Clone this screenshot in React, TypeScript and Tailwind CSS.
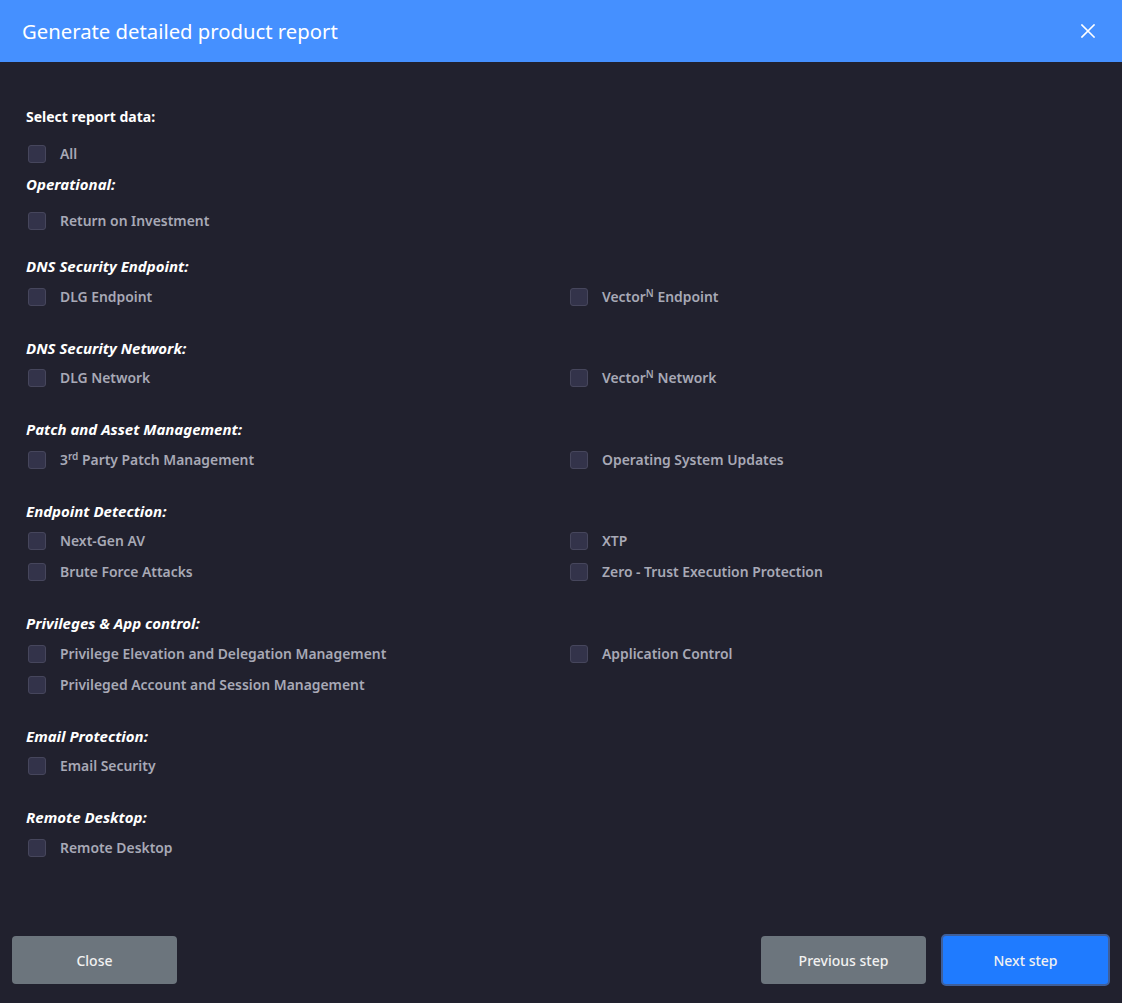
import React from "react";

type Item = { label: React.ReactNode };
type Section = { title: string; rows: [React.ReactNode, React.ReactNode?][] };

const font = { fontFamily: '"Noto Sans", "Open Sans", sans-serif' };

function Box({ label }: Item) {
  return (
    <label className="flex items-center h-[31px] cursor-pointer">
      <span className="ml-[2px] w-[18px] h-[18px] rounded-[3px] bg-[#33334a] border border-[#46465c] shrink-0" />
      <span className="ml-[14px] text-[13.9px] font-semibold text-[#a8a9b6] leading-none">{label}</span>
    </label>
  );
}

const Vector = ({ rest }: { rest: string }) => (
  <>
    Vector<sup className="text-[10px]">N</sup> {rest}
  </>
);

const sections: Section[] = [
  { title: "DNS Security Endpoint:", rows: [["DLG Endpoint", <Vector rest="Endpoint" />]] },
  { title: "DNS Security Network:", rows: [["DLG Network", <Vector rest="Network" />]] },
  {
    title: "Patch and Asset Management:",
    rows: [
      [
        <>
          3<sup className="text-[10px]">rd</sup> Party Patch Management
        </>,
        "Operating System Updates",
      ],
    ],
  },
  {
    title: "Endpoint Detection:",
    rows: [
      ["Next-Gen AV", "XTP"],
      ["Brute Force Attacks", "Zero - Trust Execution Protection"],
    ],
  },
  {
    title: "Privileges & App control:",
    rows: [
      ["Privilege Elevation and Delegation Management", "Application Control"],
      ["Privileged Account and Session Management"],
    ],
  },
  { title: "Email Protection:", rows: [["Email Security"]] },
  { title: "Remote Desktop:", rows: [["Remote Desktop"]] },
];

function Heading({ children }: { children: React.ReactNode }) {
  return <div className="h-[20px] leading-[20px] text-[15px] font-bold italic text-white">{children}</div>;
}

export default function App() {
  return (
    <div className="w-[1122px] h-[1003px] bg-[#21212e] flex flex-col" style={font}>
      <header className="h-[62px] bg-[#4590ff] flex items-center justify-between pl-[22px] pr-[27px] shrink-0">
        <h1 className="text-[20.3px] text-white font-normal leading-none">Generate detailed product report</h1>
        <svg width="14" height="14" viewBox="0 0 14 14" className="text-white">
          <path d="M1 1 L13 13 M13 1 L1 13" stroke="currentColor" strokeWidth="1.6" strokeLinecap="square" />
        </svg>
      </header>

      <main className="flex-1 pt-[45px] pl-[26px] pr-[26px]">
        <div className="h-[20px] leading-[20px] text-[14px] font-bold text-white">Select report data:</div>
        <div className="mt-[11px]">
          <Box label="All" />
        </div>
        <div className="mt-[5px]">
          <Heading>Operational:</Heading>
          <div className="mt-[11px]">
            <Box label="Return on Investment" />
          </div>
        </div>
        <div className="mt-[20px]">
          {sections.map((s, i) => (
            <section key={i} className={i === 0 ? "" : "mt-[25.5px]"}>
              <Heading>{s.title}</Heading>
              <div className="mt-[5px] grid grid-cols-[542px_1fr]">
                {s.rows.map((r, j) => (
                  <React.Fragment key={j}>
                    <Box label={r[0]} />
                    {r[1] ? <Box label={r[1]} /> : <div />}
                  </React.Fragment>
                ))}
              </div>
            </section>
          ))}
        </div>
      </main>

      <footer className="h-[86px] shrink-0 flex items-start justify-between pl-[12px] pr-[12px] pt-[17px]">
        <button className="mt-[2px] w-[165px] h-[48px] rounded-[4px] bg-[#6c757d] text-[#f1f1f1] text-[14px] font-medium">
          Close
        </button>
        <div className="flex items-start gap-[15px]">
          <button className="mt-[2px] w-[165px] h-[48px] rounded-[4px] bg-[#6c757d] text-[#f1f1f1] text-[14px] font-medium">
            Previous step
          </button>
          <button className="w-[169px] h-[52px] rounded-[5px] bg-[#1f7bff] border-[2px] border-[#3f5f9a] text-[#f1f1f1] text-[14px] font-medium">
            Next step
          </button>
        </div>
      </footer>
    </div>
  );
}
